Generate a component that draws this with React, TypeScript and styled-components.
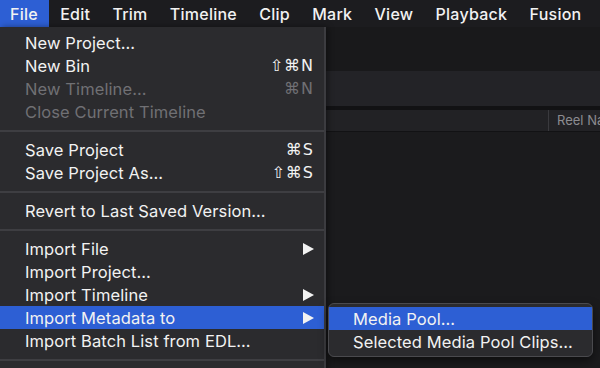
import * as React from 'react'
import styled, { createGlobalStyle } from 'styled-components';

const GlobalStyle = createGlobalStyle`
    html, body {
        margin: 0;
        padding: 0;
        background: #1a1a1c;
    }
    body {
        font-family: Inter, "Noto Sans", "DejaVu Sans", sans-serif;
    }
`

type MenuEntry =
    | { kind: 'item'; label: string; shortcut?: string; disabled?: boolean; submenu?: boolean; active?: boolean }
    | { kind: 'sep' };

const topMenus = ['File', 'Edit', 'Trim', 'Timeline', 'Clip', 'Mark', 'View', 'Playback', 'Fusion'];

const fileMenu: MenuEntry[] = [
    { kind: 'item', label: 'New Project…' },
    { kind: 'item', label: 'New Bin', shortcut: '⇧⌘N' },
    { kind: 'item', label: 'New Timeline…', shortcut: '⌘N', disabled: true },
    { kind: 'item', label: 'Close Current Timeline', disabled: true },
    { kind: 'sep' },
    { kind: 'item', label: 'Save Project', shortcut: '⌘S' },
    { kind: 'item', label: 'Save Project As…', shortcut: '⇧⌘S' },
    { kind: 'sep' },
    { kind: 'item', label: 'Revert to Last Saved Version…' },
    { kind: 'sep' },
    { kind: 'item', label: 'Import File', submenu: true },
    { kind: 'item', label: 'Import Project…' },
    { kind: 'item', label: 'Import Timeline', submenu: true },
    { kind: 'item', label: 'Import Metadata to', submenu: true, active: true },
    { kind: 'item', label: 'Import Batch List from EDL…' },
    { kind: 'sep' },
];

const subMenu = [
    { label: 'Media Pool…', active: true },
    { label: 'Selected Media Pool Clips…', active: false },
];

const Arrow = () => (
    <svg width="11" height="12" viewBox="0 0 11 12">
        <path d="M0 0 L11 6 L0 12 Z" fill="#f2f2f2" />
    </svg>
);

export default function App() {
    return (
        <Page>
            <GlobalStyle />
            <MenuBar>
                {topMenus.map((m, i) => (
                    <TopItem key={m} $open={i === 0}>{m}</TopItem>
                ))}
            </MenuBar>
            <Workspace>
                <TopArea />
                <Toolbar />
                <Divider />
                <HeaderRow>
                    <HeaderFill />
                    <HeaderCol>Reel Na</HeaderCol>
                </HeaderRow>
                <Body />

                <Dropdown>
                    {fileMenu.map((e, i) =>
                        e.kind === 'sep' ? (
                            <Separator key={i} />
                        ) : (
                            <Row key={i} $active={e.active} $disabled={e.disabled}>
                                <Label>{e.label}</Label>
                                {e.shortcut && <Shortcut>{e.shortcut}</Shortcut>}
                                {e.submenu && <Arrow />}
                            </Row>
                        )
                    )}
                    <MenuTail />
                </Dropdown>

                <SubMenu>
                    {subMenu.map((s) => (
                        <SubRow key={s.label} $active={s.active}>{s.label}</SubRow>
                    ))}
                </SubMenu>
            </Workspace>
        </Page>
    )
}

const Page = styled.div`
    width: 600px;
    height: 368px;
    overflow: hidden;
    background: #1a1a1c;
    display: flex;
    flex-direction: column;
`

const MenuBar = styled.div`
    height: 27px;
    flex: none;
    display: flex;
    align-items: stretch;
    background: #1c1c1f;
    color: #f2f2f2;
    font-size: 16px;
    font-weight: 500;
    letter-spacing: 0.25px;
`

const TopItem = styled.div<{ $open?: boolean }>`
    display: flex;
    align-items: center;
    padding: 0 11px 0 10px;
    margin-right: 1.25px;
    background: ${(p) => (p.$open ? '#2d5fd4' : 'transparent')};
`

const Workspace = styled.div`
    position: relative;
    flex: 1;
    display: flex;
    flex-direction: column;
`

const TopArea = styled.div`
    height: 44px;
    background: #19191b;
`

const Toolbar = styled.div`
    height: 35px;
    background: #232327;
`

const Divider = styled.div`
    height: 4px;
    background: #121214;
`

const HeaderRow = styled.div`
    height: 21px;
    display: flex;
    background: #222225;
    border-bottom: 1px solid #121214;
    overflow: hidden;
`

const HeaderFill = styled.div`
    width: 548px;
    flex: none;
    border-right: 1px solid #3a3a3e;
`

const HeaderCol = styled.div`
    padding-left: 8px;
    font-size: 13px;
    line-height: 21px;
    color: #8c8c90;
    white-space: nowrap;
`

const Body = styled.div`
    flex: 1;
    background: #1b1b1d;
`

const Dropdown = styled.div`
    position: absolute;
    left: 0;
    top: 0;
    width: 324px;
    padding-top: 4px;
    background: #2b2b2e;
    border-right: 2px solid #3c3c40;
    box-shadow: 2px 0 6px rgba(0, 0, 0, 0.4);
    color: #f2f2f2;
    font-size: 16.5px;
    letter-spacing: 0.1px;
`

const Row = styled.div<{ $active?: boolean; $disabled?: boolean }>`
    height: 23px;
    display: flex;
    align-items: center;
    padding: 0 10px 0 25px;
    background: ${(p) => (p.$active ? '#2d5fd4' : 'transparent')};
    color: ${(p) => (p.$disabled ? '#707074' : '#f2f2f2')};
`

const Label = styled.span`
    flex: 1;
    white-space: nowrap;
`

const Shortcut = styled.span`
    font-family: "DejaVu Sans", sans-serif;
    font-size: 16px;
    letter-spacing: 1px;
`

const Separator = styled.div`
    height: 15px;
    display: flex;
    align-items: center;
    &::after {
        content: '';
        flex: 1;
        height: 2px;
        background: #3e3e42;
    }
`

const MenuTail = styled.div`
    height: 23px;
`

const SubMenu = styled.div`
    position: absolute;
    left: 328px;
    top: 276px;
    width: 263px;
    padding: 3px 0;
    background: #2b2b2e;
    border: 1px solid #4a4a4e;
    border-radius: 6px;
    box-shadow: 0 4px 10px rgba(0, 0, 0, 0.5);
    color: #f2f2f2;
    font-size: 16.5px;
    letter-spacing: 0.1px;
`

const SubRow = styled.div<{ $active?: boolean }>`
    height: 23px;
    display: flex;
    align-items: center;
    padding-left: 24px;
    white-space: nowrap;
    background: ${(p) => (p.$active ? '#2d5fd4' : 'transparent')};
`
